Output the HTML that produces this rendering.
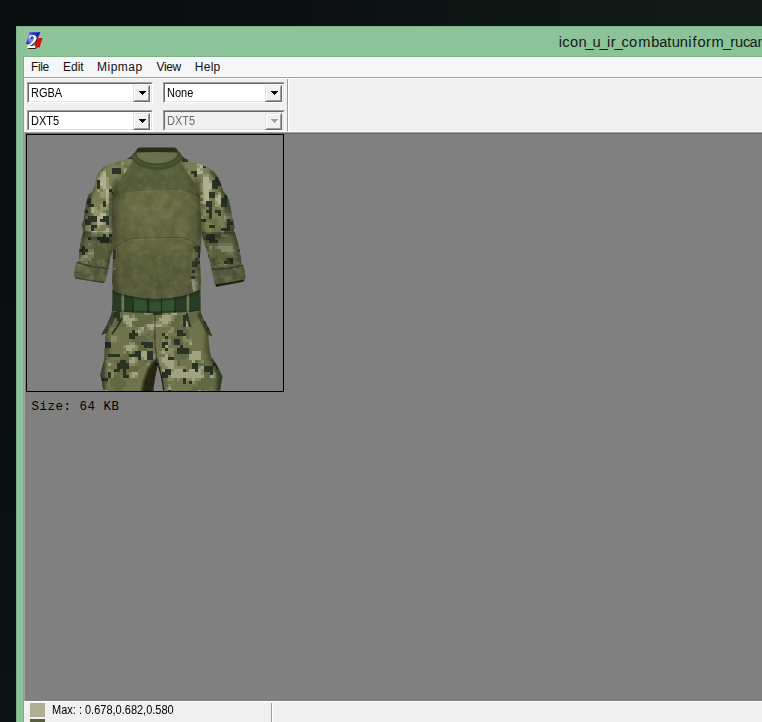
<!DOCTYPE html>
<html lang="en"><head><meta charset="utf-8"><title>TexView 2</title>
<style>
html,body{margin:0;padding:0}
body{width:762px;height:722px;overflow:hidden;position:relative;background:#0b0f10;font-family:"Liberation Sans",sans-serif;color:#000}
.abs{position:absolute}
#desk{left:0;top:0;width:762px;height:722px;background:linear-gradient(90deg,#0a0c0e 0%,#0b0e10 35%,#0e1614 65%,#121b18 100%)}
#deskl{left:0;top:0;width:16px;height:722px;background:linear-gradient(180deg,#0a0c0e 0%,#0a0e0f 50%,#0b1413 100%)}
#win{left:16px;top:26px;width:760px;height:710px;background:#8dc399;box-shadow:0 0 0 1px rgba(0,0,0,.0)}
#winedge{left:16px;top:26px;width:760px;height:710px;border:1px solid #7fb08a;box-sizing:border-box}
#menu{left:24px;top:57px;width:740px;height:20px;background:#f5f6f7}
#menuline{left:24px;top:77px;width:740px;height:1px;background:#a0a0a0}
#menuline2{left:24px;top:78px;width:740px;height:1px;background:#ffffff}
.mi{position:absolute;top:60px;font-size:12px;line-height:15px;white-space:nowrap;color:#111}
#tool{left:24px;top:79px;width:740px;height:53px;background:#f0f0f0}
.combo{position:absolute;height:21px;box-sizing:border-box;background:#fff;border-top:1px solid #a0a0a0;border-left:1px solid #a0a0a0;border-right:1px solid #fff;border-bottom:1px solid #fff}
.combo .in{position:absolute;left:0;top:0;right:0;bottom:0;border-top:1px solid #696969;border-left:1px solid #696969;border-right:1px solid #e3e3e3;border-bottom:1px solid #e3e3e3}
.combo .tx{position:absolute;left:3px;top:4px;font-size:11px;line-height:13px;white-space:nowrap;transform:scaleY(1.125);transform-origin:0 10.5px}
.combo .btn{position:absolute;right:2px;top:2px;width:17px;height:17px;box-sizing:border-box;background:#f0f0f0;border-top:1px solid #e3e3e3;border-left:1px solid #e3e3e3;border-right:1px solid #696969;border-bottom:1px solid #696969}
.combo .btn i{position:absolute;left:0;top:0;right:0;bottom:0;border-top:1px solid #fff;border-left:1px solid #fff;border-right:1px solid #a0a0a0;border-bottom:1px solid #a0a0a0}
.combo .btn svg{position:absolute;left:5px;top:5px}
.combo.dis{background:#f0f0f0}
.combo.dis .tx{color:#6d6d6d}
#client{left:24px;top:132px;width:740px;height:569px;background:#808080}
#frame{left:26px;top:134px;width:258px;height:258px;background:#000}
#pic{left:27px;top:135px;width:256px;height:256px;display:block}
#size{left:31.5px;top:399.5px;font-family:"Liberation Mono",monospace;font-size:12.5px;letter-spacing:.5px;line-height:14px;white-space:pre;color:#000}
#status{left:24px;top:701px;width:740px;height:21px;background:#f0f0f0;border-top:1px solid #fff}
#sw1{left:30px;top:703px;width:15px;height:14px;background:#adae94}
#sw2{left:30px;top:719px;width:15px;height:5px;background:#5a5d3f}
#stx{left:52px;top:703.5px;font-size:11px;line-height:13px;white-space:nowrap;transform:scaleY(1.125);transform-origin:0 10.5px}
</style></head><body>
<div id="desk" class="abs"></div><div id="deskl" class="abs"></div>
<div id="win" class="abs"></div>
<div id="winedge" class="abs"></div>
<svg class="abs" style="left:22px;top:29px" width="24" height="24" viewBox="22 29 24 24">
<defs><linearGradient id="gib" gradientUnits="userSpaceOnUse" x1="26" y1="42" x2="40" y2="33"><stop offset="0" stop-color="#1a22d8"/><stop offset=".3" stop-color="#8c96f4"/><stop offset=".62" stop-color="#2a34d6"/><stop offset="1" stop-color="#0808a8"/></linearGradient><filter id="ish" x="-20%" y="-20%" width="150%" height="150%"><feOffset in="SourceAlpha" dx=".7" dy=".5" result="o"/><feFlood flood-color="#3a1010" flood-opacity=".9"/><feComposite in2="o" operator="in"/><feMerge><feMergeNode/><feMergeNode in="SourceGraphic"/></feMerge></filter></defs>
<polygon points="29.2,32.2 40.4,32.2 35.2,44 26,44" fill="url(#gib)"/>
<polygon points="38.2,38 42.6,38 39.6,47.6 33.6,47.6" fill="#d41010"/>
<rect x="28.4" y="47.6" width="7.4" height="1.2" fill="#1c2a1c"/>
<text x="27.6" y="47.6" font-family="Liberation Serif,serif" font-style="italic" font-weight="bold" font-size="18.5" fill="#fff" filter="url(#ish)">2</text>
</svg>
<svg class="abs" style="left:540px;top:26px" width="222" height="31" viewBox="540 26 222 31"><text x="558.78 562.26 569.88 578.42 585.45 592.47 599.50 606.97 610.68 614.56 621.50 629.12 638.13 651.21 659.24 667.30 671.79 679.82 688.30 692.40 697.39 706.06 711.42 722.99 730.15 735.04 742.98 749.60 757.61 770.68 778.21 785.15" y="47" font-family="Liberation Sans,sans-serif" font-size="14.67" fill="#141a15">icon_u_ir_combatuniform_rucamo_ca.paa - TexView 2</text></svg>
<div class="abs" style="left:23px;top:56px;width:745px;height:680px;background:#7fb28b"></div>
<div id="menu" class="abs"></div><div class="abs" style="left:24px;top:76px;width:740px;height:1px;background:#fbfbfb"></div><div id="menuline" class="abs"></div><div id="menuline2" class="abs"></div>
<span class="mi" style="left:31px;letter-spacing:-.4px">File</span>
<span class="mi" style="left:63px">Edit</span>
<span class="mi" style="left:97px;letter-spacing:.5px">Mipmap</span>
<span class="mi" style="left:156.5px;letter-spacing:-.4px">View</span>
<span class="mi" style="left:194.7px;letter-spacing:.3px">Help</span>
<div id="tool" class="abs"></div><div class="abs" style="left:25px;top:79px;width:1px;height:52px;background:#fcfcfc"></div>
<div class="combo" style="left:27px;top:82px;width:126px"><div class="in"></div><span class="tx">RGBA</span><div class="btn"><i></i><svg width="7" height="4" viewBox="0 0 7 4" shape-rendering="crispEdges"><path d="M0 0h7v1h-1v1h-1v1h-1v1h-1v-1h-1v-1h-1v-1h-1z" fill="#000"/></svg></div></div>
<div class="combo" style="left:163px;top:82px;width:122px"><div class="in"></div><span class="tx">None</span><div class="btn"><i></i><svg width="7" height="4" viewBox="0 0 7 4" shape-rendering="crispEdges"><path d="M0 0h7v1h-1v1h-1v1h-1v1h-1v-1h-1v-1h-1v-1h-1z" fill="#000"/></svg></div></div>
<div class="combo" style="left:27px;top:110px;width:126px"><div class="in"></div><span class="tx">DXT5</span><div class="btn"><i></i><svg width="7" height="4" viewBox="0 0 7 4" shape-rendering="crispEdges"><path d="M0 0h7v1h-1v1h-1v1h-1v1h-1v-1h-1v-1h-1v-1h-1z" fill="#000"/></svg></div></div>
<div class="combo dis" style="left:163px;top:110px;width:122px"><div class="in"></div><span class="tx">DXT5</span><div class="btn"><i></i><svg width="7" height="4" viewBox="0 0 7 4" shape-rendering="crispEdges"><path d="M0 0h7v1h-1v1h-1v1h-1v1h-1v-1h-1v-1h-1v-1h-1z" fill="#a0a0a0"/></svg></div></div>
<div class="abs" style="left:287px;top:79px;width:1px;height:53px;background:#a0a0a0"></div>
<div class="abs" style="left:288px;top:79px;width:1px;height:53px;background:#fff"></div>
<div id="client" class="abs"></div>
<div class="abs" style="left:24px;top:131px;width:740px;height:1px;background:#fafafa"></div>
<div class="abs" style="left:24px;top:132px;width:740px;height:1px;background:#a0a0a0"></div>
<div class="abs" style="left:24px;top:133px;width:740px;height:1px;background:#696969"></div>
<div class="abs" style="left:24px;top:132px;width:1px;height:569px;background:#a0a0a0"></div>
<div id="frame" class="abs"></div>
<svg id="pic" class="abs" width="256" height="256" viewBox="27 135 256 256"><defs>
<clipPath id="cls"><path d="M136 153L129.2 157.7L121.4 160.5L110.3 163.8L102.6 167.7L98.1 173.2L95.9 178.8L94.3 186.5L92 192.1L88.7 194.3L86.5 202L84.3 212L83.7 220L81.5 224.5L83.4 231.6L82.6 235L80.4 243.8L79.3 251.6L78.7 261.5L76.5 262.6L75 269L74.3 275.4L75.2 278.4L90 281L103.7 283L105.6 281L107 275L108.1 269.8L108.7 268.2L110.3 257.1L113 250L114 240L114 222L113 200L117 192L123 182L129 174L138 160Z"/></clipPath>
<clipPath id="crs"><path d="M178 153L185.5 158.8L191.5 161.5L197.7 163.8L203.5 165.8L208.8 167.7L214.3 172.1L218.8 177.7L221 184.3L223.2 191L227.6 196.5L230.4 206.5L232.1 215L233.2 220L234.8 227.2L233.4 230.5L235.4 233.8L238.2 243.8L240.4 253.8L241.5 263.8L243.7 266L244.6 271L245.4 277L244.6 280L243.2 281.8L231 284L216.6 286.7L215.4 285.4L214.9 283.7L213 276L211.6 268.2L209.9 261.5L206 248.2L202.2 236L199 222L199 208.2L198 194.6L190 184L181 172L175 158Z"/></clipPath>
<clipPath id="cpa"><path d="M112.2 305L111.7 312.7L111 315.3L108.8 320L106.6 325.5L103.6 330.5L100.8 335L103.5 334.2L106.4 333L105.3 337L105.3 338.2L104.9 345L104.6 351L104 359.9L102.1 367.5L100.2 375.2L101.5 379.6L102.4 385L103.6 392L153.6 392L154.2 384L155.6 376L157 368.5L157.6 366.2L158.6 368.5L160.6 376L162.2 384L163.1 392L220 392L221.3 382.8L222.6 376.4L218.8 368.8L213.7 359.9L211.1 357.3L209.9 351L208.6 340.8L208.2 335L212.4 336.3L209.9 330.6L206.7 324.2L203.5 319.1L201 312.7L200.4 305Z"/></clipPath>
<clipPath id="cto"><path d="M135.5 154L134.3 158.5L130 165L128 168.8L121.4 177.7L115.9 186.5L112.5 195.4L111.4 206.5L112 220L112.5 237L113 250L112.7 262L112.5 270.4L112 281.5L113 290.5L120 293.5L130 296L142 298L156 299L170 298L182 296L192 293L200.4 289L201 281.5L200.5 270.4L199.9 259.3L200.5 248.2L201.6 237.2L201.2 220L200.5 206.5L199.9 195.4L196.6 186.5L191 177.7L184.4 168.8L181 163L178.6 158.5L178.5 154Z"/></clipPath>
<clipPath id="cside"><path d="M202 236L195 244L190.5 262L191 280L193.5 293L202 293Z"/></clipPath><clipPath id="cside2"><path d="M111 246L116.5 250L117.5 262L115.5 270L111 270Z"/></clipPath><clipPath id="cbe"><path d="M112.4 289L120 292.5L130 295L142 297L156 298L170 297L182 295L192 292L200.3 288L200.6 300L200.6 310.5L192 311.8L175 312.6L156 312.9L135 312.6L120 311.8L112.2 310.5L112.3 300Z"/></clipPath>
<linearGradient id="gt" gradientUnits="userSpaceOnUse" x1="0" y1="150" x2="0" y2="300"><stop offset="0" stop-color="#646840"/><stop offset=".3" stop-color="#6b6e45"/><stop offset=".6" stop-color="#676a43"/><stop offset=".82" stop-color="#62653f"/><stop offset="1" stop-color="#595c3a"/></linearGradient>
<linearGradient id="gts" gradientUnits="userSpaceOnUse" x1="111" y1="0" x2="202" y2="0"><stop offset="0" stop-color="#000" stop-opacity=".38"/><stop offset=".1" stop-color="#000" stop-opacity=".08"/><stop offset=".25" stop-color="#000" stop-opacity="0"/><stop offset=".78" stop-color="#000" stop-opacity="0"/><stop offset=".92" stop-color="#000" stop-opacity=".1"/><stop offset="1" stop-color="#000" stop-opacity=".4"/></linearGradient>
<filter id="mot" x="0" y="0" width="100%" height="100%"><feTurbulence type="fractalNoise" baseFrequency="0.09" numOctaves="3" seed="7" result="n"/><feColorMatrix type="matrix" values="0 0 0 0 0  0 0 0 0 0  0 0 0 0 0  1.6 0 0 0 -0.55"/></filter><filter id="mot2" x="0" y="0" width="100%" height="100%"><feTurbulence type="fractalNoise" baseFrequency="0.16" numOctaves="2" seed="3" result="n"/><feColorMatrix type="matrix" values="0 0 0 0 1  0 0 0 0 1  0 0 0 0 .8  1.5 0 0 0 -0.62"/></filter><filter id="bl" x="-5%" y="-5%" width="110%" height="110%"><feGaussianBlur stdDeviation="0.7"/></filter>
<filter id="b1" x="-30%" y="-30%" width="160%" height="160%"><feGaussianBlur stdDeviation="1"/></filter>
<filter id="b2" x="-30%" y="-30%" width="160%" height="160%"><feGaussianBlur stdDeviation="2"/></filter>
<filter id="b4" x="-40%" y="-40%" width="180%" height="180%"><feGaussianBlur stdDeviation="4"/></filter>
</defs><rect x="27" y="135" width="256" height="256" fill="#808080"/><g clip-path="url(#cls)"><g filter="url(#bl)"><rect x="70" y="150" width="70" height="140" fill="#7a7c54"/><path fill="#2c3527" d="M127 156h6v3h-6zM112 168h9v3h-9zM112 171h9v3h-9zM97 180h3v3h-3zM97 183h3v3h-3zM97 186h3v3h-3zM109 189h3v3h-3zM112 192h3v3h-3zM85 198h6v3h-6zM85 201h6v3h-6zM103 201h3v3h-3zM88 204h6v3h-6zM103 204h3v3h-3zM133 204h3v3h-3zM130 207h3v3h-3zM85 210h3v3h-3zM139 210h3v3h-3zM88 216h9v3h-9zM103 216h6v3h-6zM85 219h12v3h-12zM100 219h9v3h-9zM85 222h6v3h-6zM106 222h3v3h-3zM115 222h3v3h-3zM130 222h6v3h-6zM91 225h6v3h-6zM133 225h3v3h-3zM70 228h9v3h-9zM91 228h3v3h-3zM70 231h9v3h-9zM70 234h3v3h-3zM103 234h3v3h-3zM109 234h3v3h-3zM79 237h3v3h-3zM88 237h3v3h-3zM97 237h12v3h-12zM100 240h9v3h-9zM82 246h3v3h-3zM79 249h9v3h-9zM82 252h3v3h-3zM118 276h3v3h-3zM115 279h3v3h-3zM85 282h3v3h-3zM115 282h9v3h-9zM115 285h9v3h-9zM115 288h12v3h-12z"/><path fill="#6a7049" d="M70 150h21v3h-21zM109 150h9v3h-9zM79 153h9v3h-9zM109 153h9v3h-9zM109 156h9v3h-9zM115 159h6v3h-6zM115 162h6v3h-6zM136 162h3v3h-3zM124 165h15v3h-15zM76 168h3v3h-3zM127 168h12v3h-12zM121 171h3v3h-3zM127 171h3v3h-3zM133 171h6v3h-6zM118 174h6v3h-6zM130 174h12v3h-12zM121 177h3v3h-3zM127 177h9v3h-9zM121 180h15v3h-15zM118 183h18v3h-18zM112 186h18v3h-18zM136 186h3v3h-3zM112 189h15v3h-15zM133 189h3v3h-3zM109 192h3v3h-3zM115 192h6v3h-6zM124 192h15v3h-15zM112 195h12v3h-12zM127 195h12v3h-12zM109 198h21v3h-21zM136 198h3v3h-3zM109 201h3v3h-3zM115 201h12v3h-12zM133 201h3v3h-3zM109 204h3v3h-3zM115 204h18v3h-18zM139 204h3v3h-3zM109 207h12v3h-12zM106 210h12v3h-12zM133 210h6v3h-6zM73 213h9v3h-9zM109 213h3v3h-3zM139 213h3v3h-3zM73 216h12v3h-12zM70 219h15v3h-15zM70 222h12v3h-12zM73 225h12v3h-12zM79 228h6v3h-6zM79 231h6v3h-6zM112 231h9v3h-9zM73 234h12v3h-12zM112 234h12v3h-12zM70 237h3v3h-3zM109 237h15v3h-15zM70 240h6v3h-6zM109 240h3v3h-3zM115 240h9v3h-9zM94 243h3v3h-3zM115 243h9v3h-9zM94 246h9v3h-9zM115 246h9v3h-9zM94 249h12v3h-12zM118 249h3v3h-3zM94 252h12v3h-12zM118 252h3v3h-3zM94 255h12v3h-12zM94 258h9v3h-9zM115 258h3v3h-3zM100 261h12v3h-12zM115 261h12v3h-12zM136 261h3v3h-3zM91 264h6v3h-6zM100 264h9v3h-9zM112 264h6v3h-6zM88 267h9v3h-9zM100 267h3v3h-3zM109 267h12v3h-12zM88 270h6v3h-6zM109 270h15v3h-15zM85 273h9v3h-9zM106 273h6v3h-6zM118 273h3v3h-3zM79 276h15v3h-15zM109 276h3v3h-3zM121 276h3v3h-3zM82 279h6v3h-6zM91 279h3v3h-3zM79 282h6v3h-6zM91 282h3v3h-3zM76 285h3v3h-3zM94 285h3v3h-3zM76 288h12v3h-12z"/><path fill="#92946c" d="M109 159h3v3h-3zM121 162h3v3h-3zM73 168h3v3h-3zM103 168h3v3h-3zM124 168h3v3h-3zM73 171h3v3h-3zM97 171h3v3h-3zM130 171h3v3h-3zM73 174h6v3h-6zM97 174h3v3h-3zM124 174h6v3h-6zM73 177h3v3h-3zM79 177h3v3h-3zM94 177h3v3h-3zM106 177h3v3h-3zM124 177h3v3h-3zM76 180h3v3h-3zM94 180h3v3h-3zM106 180h3v3h-3zM94 183h3v3h-3zM106 183h3v3h-3zM136 183h3v3h-3zM100 186h3v3h-3zM106 186h6v3h-6zM130 186h6v3h-6zM97 189h3v3h-3zM103 189h3v3h-3zM127 189h6v3h-6zM100 192h6v3h-6zM121 192h3v3h-3zM100 195h6v3h-6zM124 195h3v3h-3zM133 198h3v3h-3zM112 201h3v3h-3zM130 201h3v3h-3zM136 201h3v3h-3zM100 204h3v3h-3zM106 204h3v3h-3zM112 204h3v3h-3zM94 207h3v3h-3zM100 207h9v3h-9zM133 207h3v3h-3zM139 207h3v3h-3zM94 210h9v3h-9zM94 213h6v3h-6zM85 216h3v3h-3zM103 222h3v3h-3zM97 225h3v3h-3zM139 225h3v3h-3zM109 228h3v3h-3zM97 231h6v3h-6zM88 234h3v3h-3zM97 234h6v3h-6zM76 240h3v3h-3zM112 240h3v3h-3zM88 243h3v3h-3zM109 243h6v3h-6zM109 246h6v3h-6zM88 249h6v3h-6zM85 252h3v3h-3zM79 255h3v3h-3zM88 255h6v3h-6zM73 258h3v3h-3zM127 258h3v3h-3zM82 261h3v3h-3zM112 261h3v3h-3zM109 264h3v3h-3zM124 264h3v3h-3zM85 267h3v3h-3zM103 267h3v3h-3zM121 267h3v3h-3zM127 267h3v3h-3zM85 270h3v3h-3zM106 270h3v3h-3zM103 273h3v3h-3zM133 273h3v3h-3zM136 276h6v3h-6zM88 279h3v3h-3zM109 279h3v3h-3zM82 285h6v3h-6zM91 285h3v3h-3zM112 285h3v3h-3zM124 285h6v3h-6zM127 288h3v3h-3z"/><path fill="#b0b08e" d="M112 159h3v3h-3zM76 171h3v3h-3zM100 171h6v3h-6zM124 171h3v3h-3zM100 174h6v3h-6zM76 177h3v3h-3zM97 177h9v3h-9zM79 180h3v3h-3zM100 180h6v3h-6zM100 183h6v3h-6zM103 186h3v3h-3zM106 189h3v3h-3zM106 192h3v3h-3zM106 195h3v3h-3zM106 198h3v3h-3zM130 198h3v3h-3zM106 201h3v3h-3zM127 201h3v3h-3zM136 204h3v3h-3zM91 207h3v3h-3zM136 207h3v3h-3zM91 210h3v3h-3zM100 213h6v3h-6zM97 216h6v3h-6zM97 219h3v3h-3zM136 219h6v3h-6zM97 222h6v3h-6zM136 222h6v3h-6zM85 225h6v3h-6zM85 228h6v3h-6zM106 228h3v3h-3zM91 231h6v3h-6zM103 231h9v3h-9zM91 234h6v3h-6zM106 234h3v3h-3zM73 237h6v3h-6zM88 252h6v3h-6zM82 255h6v3h-6zM118 255h6v3h-6zM76 258h15v3h-15zM118 258h6v3h-6zM85 261h3v3h-3zM106 267h3v3h-3zM124 267h3v3h-3zM103 270h3v3h-3zM112 273h6v3h-6zM103 276h6v3h-6zM112 276h6v3h-6zM112 279h3v3h-3zM118 279h3v3h-3zM88 282h3v3h-3zM88 285h3v3h-3z"/></g><g filter="url(#b2)" fill="none" stroke="#10180c"><path d="M104 163L96 176L90 192L84 205L82 230L79 250L73 270L73 280" stroke-width="5" stroke-opacity=".55"/><path d="M118 180L113 200L114 240L112 258L108 284" stroke-width="6" stroke-opacity=".5"/><path d="M82 232L95 237.5L111 241" stroke-width="3" stroke-opacity=".6"/></g><rect x="70" y="232" width="50" height="60" fill="#1a2012" fill-opacity=".27"/><path d="M76 262.5L109.5 268L106 284L73 279Z" fill="#5e6542" fill-opacity=".88"/><rect x="70" y="258" width="44" height="30" filter="url(#mot)" opacity=".3"/><rect x="70" y="258" width="44" height="30" filter="url(#mot2)" opacity=".22"/><path d="M75.5 278L90 280.6L104 282.6" stroke="#1c2216" stroke-opacity=".55" stroke-width="1.6" fill="none" filter="url(#bl)"/><path d="M76.5 262.5L92 266.5L109 268.6" stroke="#20281a" stroke-opacity=".6" stroke-width="1.3" fill="none" filter="url(#bl)"/><path d="M84.5 196L91 192L92 230L84 232Z" fill="#1c2416" fill-opacity=".35" filter="url(#b1)"/></g><g clip-path="url(#crs)"><g filter="url(#bl)"><rect x="176" y="150" width="74" height="140" fill="#7a7c54"/><path fill="#2c3527" d="M179 156h6v3h-6zM182 159h6v3h-6zM203 165h3v3h-3zM248 168h3v3h-3zM191 171h6v3h-6zM185 174h3v3h-3zM194 174h3v3h-3zM215 177h3v3h-3zM212 180h9v3h-9zM212 183h9v3h-9zM212 186h6v3h-6zM209 192h6v3h-6zM209 195h6v3h-6zM224 195h3v3h-3zM221 198h6v3h-6zM206 201h6v3h-6zM221 201h6v3h-6zM206 204h6v3h-6zM221 204h6v3h-6zM209 207h3v3h-3zM206 210h6v3h-6zM215 210h6v3h-6zM209 213h3v3h-3zM218 213h3v3h-3zM209 216h3v3h-3zM242 216h6v3h-6zM200 219h6v3h-6zM227 219h3v3h-3zM239 219h12v3h-12zM227 222h6v3h-6zM239 222h12v3h-12zM179 225h3v3h-3zM191 225h3v3h-3zM209 225h6v3h-6zM227 225h3v3h-3zM221 228h9v3h-9zM206 234h9v3h-9zM206 237h9v3h-9zM209 240h9v3h-9zM188 246h9v3h-9zM239 249h6v3h-6zM206 255h3v3h-3zM203 258h6v3h-6zM227 258h6v3h-6zM224 261h9v3h-9zM218 267h6v3h-6zM215 270h9v3h-9zM218 273h3v3h-3zM200 276h6v3h-6zM200 279h3v3h-3z"/><path fill="#6a7049" d="M176 150h21v3h-21zM215 150h3v3h-3zM248 150h3v3h-3zM176 153h12v3h-12zM176 156h3v3h-3zM185 156h3v3h-3zM176 159h6v3h-6zM176 162h9v3h-9zM176 165h9v3h-9zM176 168h12v3h-12zM176 171h6v3h-6zM209 171h6v3h-6zM176 174h3v3h-3zM212 174h6v3h-6zM224 174h27v3h-27zM218 177h33v3h-33zM176 180h3v3h-3zM221 180h15v3h-15zM239 180h12v3h-12zM176 183h3v3h-3zM221 183h15v3h-15zM239 183h12v3h-12zM176 186h3v3h-3zM182 186h3v3h-3zM221 186h9v3h-9zM239 186h12v3h-12zM176 189h3v3h-3zM215 189h15v3h-15zM233 189h3v3h-3zM248 189h3v3h-3zM182 192h3v3h-3zM215 192h3v3h-3zM221 192h9v3h-9zM233 192h3v3h-3zM176 195h3v3h-3zM221 195h3v3h-3zM227 195h9v3h-9zM212 198h3v3h-3zM227 198h12v3h-12zM212 201h3v3h-3zM227 201h24v3h-24zM212 204h3v3h-3zM227 204h18v3h-18zM248 204h3v3h-3zM215 207h3v3h-3zM224 207h21v3h-21zM224 210h3v3h-3zM236 210h3v3h-3zM182 213h3v3h-3zM176 216h3v3h-3zM185 216h9v3h-9zM206 216h3v3h-3zM176 219h21v3h-21zM206 219h12v3h-12zM176 222h3v3h-3zM185 222h15v3h-15zM212 222h6v3h-6zM236 222h3v3h-3zM176 225h3v3h-3zM182 225h9v3h-9zM194 225h3v3h-3zM215 225h6v3h-6zM236 225h15v3h-15zM179 228h9v3h-9zM191 228h12v3h-12zM212 228h9v3h-9zM236 228h15v3h-15zM176 231h12v3h-12zM200 231h6v3h-6zM212 231h9v3h-9zM224 231h3v3h-3zM239 231h12v3h-12zM176 234h6v3h-6zM197 234h3v3h-3zM215 234h6v3h-6zM242 234h3v3h-3zM179 237h3v3h-3zM197 237h9v3h-9zM242 237h3v3h-3zM179 240h3v3h-3zM176 243h3v3h-3zM242 243h3v3h-3zM179 246h3v3h-3zM215 255h3v3h-3zM191 258h9v3h-9zM212 258h6v3h-6zM191 261h18v3h-18zM212 261h3v3h-3zM191 264h21v3h-21zM191 267h9v3h-9zM206 267h6v3h-6zM194 270h3v3h-3zM206 270h6v3h-6zM206 273h6v3h-6zM206 276h9v3h-9zM203 279h12v3h-12zM197 282h21v3h-21zM200 285h9v3h-9zM212 285h3v3h-3zM218 285h3v3h-3zM248 285h3v3h-3zM215 288h9v3h-9z"/><path fill="#92946c" d="M230 150h6v3h-6zM218 153h6v3h-6zM197 159h3v3h-3zM218 162h3v3h-3zM197 165h3v3h-3zM236 165h3v3h-3zM200 168h3v3h-3zM236 168h3v3h-3zM245 168h3v3h-3zM215 171h3v3h-3zM224 171h3v3h-3zM182 174h3v3h-3zM203 174h6v3h-6zM218 174h6v3h-6zM182 177h3v3h-3zM179 180h3v3h-3zM209 180h3v3h-3zM179 183h3v3h-3zM200 183h3v3h-3zM200 186h3v3h-3zM230 186h6v3h-6zM179 189h3v3h-3zM191 189h3v3h-3zM200 189h3v3h-3zM209 189h3v3h-3zM218 192h3v3h-3zM230 192h3v3h-3zM248 192h3v3h-3zM215 195h3v3h-3zM245 195h3v3h-3zM245 198h6v3h-6zM215 201h3v3h-3zM215 204h6v3h-6zM245 204h3v3h-3zM185 207h3v3h-3zM197 207h6v3h-6zM200 210h6v3h-6zM242 210h6v3h-6zM200 213h6v3h-6zM224 213h6v3h-6zM233 213h3v3h-3zM245 213h6v3h-6zM179 216h6v3h-6zM233 216h3v3h-3zM197 219h3v3h-3zM224 219h3v3h-3zM182 222h3v3h-3zM188 228h3v3h-3zM221 231h3v3h-3zM227 234h3v3h-3zM185 240h3v3h-3zM197 240h3v3h-3zM179 243h3v3h-3zM188 243h9v3h-9zM203 243h6v3h-6zM218 243h15v3h-15zM182 246h3v3h-3zM200 246h3v3h-3zM215 246h3v3h-3zM236 246h6v3h-6zM191 249h3v3h-3zM206 249h6v3h-6zM233 249h3v3h-3zM191 252h15v3h-15zM209 252h3v3h-3zM227 252h6v3h-6zM242 252h3v3h-3zM188 255h9v3h-9zM209 255h3v3h-3zM209 258h3v3h-3zM185 261h3v3h-3zM209 261h3v3h-3zM218 264h6v3h-6zM200 267h6v3h-6zM215 267h3v3h-3zM185 273h12v3h-12zM221 273h9v3h-9zM248 279h3v3h-3zM248 282h3v3h-3zM230 285h3v3h-3zM188 288h6v3h-6z"/><path fill="#b0b08e" d="M218 150h3v3h-3zM194 159h3v3h-3zM197 162h9v3h-9zM200 165h3v3h-3zM218 165h3v3h-3zM197 168h3v3h-3zM218 168h6v3h-6zM233 168h3v3h-3zM197 171h6v3h-6zM218 171h6v3h-6zM185 177h3v3h-3zM203 177h6v3h-6zM182 180h3v3h-3zM203 180h6v3h-6zM203 183h9v3h-9zM179 186h3v3h-3zM203 186h9v3h-9zM203 189h6v3h-6zM230 189h3v3h-3zM203 192h6v3h-6zM200 195h9v3h-9zM218 195h3v3h-3zM248 195h3v3h-3zM203 198h6v3h-6zM215 198h6v3h-6zM200 201h6v3h-6zM218 201h3v3h-3zM230 213h3v3h-3zM200 216h3v3h-3zM224 216h9v3h-9zM179 222h3v3h-3zM221 234h6v3h-6zM182 240h3v3h-3zM200 240h6v3h-6zM182 243h6v3h-6zM197 243h3v3h-3zM185 246h3v3h-3zM209 246h3v3h-3zM218 246h15v3h-15zM242 246h3v3h-3zM185 249h6v3h-6zM221 249h12v3h-12zM188 252h3v3h-3zM206 252h3v3h-3zM239 252h3v3h-3zM224 264h3v3h-3zM224 267h6v3h-6zM197 270h9v3h-9zM224 270h9v3h-9zM197 273h9v3h-9zM191 276h9v3h-9z"/></g><g filter="url(#b2)" fill="none" stroke="#10180c"><path d="M212 168L220 180L224 190L231 200L235 228L240 252L246 268L246 282" stroke-width="5" stroke-opacity=".55"/><path d="M196 180L199 200L200 230L205 250L212 285" stroke-width="6" stroke-opacity=".5"/><path d="M203 240L220 236L236 231" stroke-width="3" stroke-opacity=".6"/></g><rect x="196" y="232" width="56" height="60" fill="#1a2012" fill-opacity=".3"/><path d="M210.5 268.5L243.5 263.5L246 282L215 287Z" fill="#555c3c" fill-opacity=".9"/><rect x="206" y="258" width="44" height="32" filter="url(#mot)" opacity=".3"/><rect x="206" y="258" width="44" height="32" filter="url(#mot2)" opacity=".22"/><path d="M216 285.8L231 283.6L244 281" stroke="#10150c" stroke-opacity=".85" stroke-width="3" fill="none" filter="url(#bl)"/><path d="M211 269.5L228 268.5L243.5 265" stroke="#20281a" stroke-opacity=".6" stroke-width="1.3" fill="none" filter="url(#bl)"/><path d="M222 190L229 196L235 231L226 233Z" fill="#1c2416" fill-opacity=".4" filter="url(#b1)"/></g><g clip-path="url(#cpa)"><g filter="url(#bl)"><rect x="96" y="303" width="130" height="92" fill="#7a7c54"/><path fill="#2c3527" d="M111 303h3v3h-3zM111 306h3v3h-3zM180 306h3v3h-3zM117 309h3v3h-3zM114 312h6v3h-6zM153 312h9v3h-9zM114 315h6v3h-6zM183 315h3v3h-3zM207 315h3v3h-3zM117 318h3v3h-3zM183 318h3v3h-3zM207 318h6v3h-6zM183 321h3v3h-3zM204 321h9v3h-9zM183 324h3v3h-3zM207 327h3v3h-3zM132 330h3v3h-3zM177 330h6v3h-6zM129 333h9v3h-9zM162 333h3v3h-3zM177 333h9v3h-9zM96 336h3v3h-3zM129 336h6v3h-6zM165 336h3v3h-3zM174 339h6v3h-6zM105 342h6v3h-6zM141 342h12v3h-12zM162 342h6v3h-6zM174 342h6v3h-6zM105 345h6v3h-6zM144 345h9v3h-9zM162 345h3v3h-3zM180 345h3v3h-3zM102 348h3v3h-3zM165 348h3v3h-3zM177 348h12v3h-12zM135 351h6v3h-6zM147 351h6v3h-6zM177 351h12v3h-12zM108 354h12v3h-12zM129 354h12v3h-12zM147 354h6v3h-6zM219 354h6v3h-6zM138 357h3v3h-3zM147 357h6v3h-6zM168 357h6v3h-6zM213 357h12v3h-12zM120 360h6v3h-6zM216 360h12v3h-12zM117 363h12v3h-12zM156 363h3v3h-3zM192 363h6v3h-6zM213 363h12v3h-12zM117 366h12v3h-12zM192 366h6v3h-6zM204 366h9v3h-9zM216 366h9v3h-9zM114 369h6v3h-6zM123 369h3v3h-3zM165 369h6v3h-6zM183 369h3v3h-3zM195 369h3v3h-3zM204 369h9v3h-9zM108 372h3v3h-3zM123 372h3v3h-3zM162 372h9v3h-9zM210 372h3v3h-3zM108 375h3v3h-3zM123 375h6v3h-6zM162 375h6v3h-6zM99 378h9v3h-9zM183 378h3v3h-3zM183 381h3v3h-3zM189 381h3v3h-3zM168 390h3v3h-3z"/><path fill="#6a7049" d="M96 303h6v3h-6zM105 303h6v3h-6zM114 303h3v3h-3zM138 303h9v3h-9zM189 303h9v3h-9zM96 306h3v3h-3zM105 306h6v3h-6zM114 306h3v3h-3zM138 306h9v3h-9zM189 306h3v3h-3zM195 306h3v3h-3zM108 309h9v3h-9zM120 309h3v3h-3zM138 309h3v3h-3zM189 309h3v3h-3zM210 309h3v3h-3zM108 312h6v3h-6zM120 312h3v3h-3zM135 312h9v3h-9zM189 312h9v3h-9zM204 312h3v3h-3zM210 312h6v3h-6zM111 315h3v3h-3zM120 315h3v3h-3zM135 315h18v3h-18zM177 315h6v3h-6zM186 315h18v3h-18zM210 315h9v3h-9zM111 318h6v3h-6zM120 318h3v3h-3zM138 318h15v3h-15zM174 318h9v3h-9zM186 318h12v3h-12zM111 321h12v3h-12zM132 321h21v3h-21zM171 321h9v3h-9zM189 321h6v3h-6zM111 324h15v3h-15zM135 324h9v3h-9zM171 324h12v3h-12zM189 324h3v3h-3zM174 327h12v3h-12zM174 330h3v3h-3zM183 330h6v3h-6zM147 333h3v3h-3zM153 333h3v3h-3zM186 333h3v3h-3zM135 336h12v3h-12zM150 336h6v3h-6zM171 336h12v3h-12zM186 336h3v3h-3zM132 339h18v3h-18zM171 339h3v3h-3zM180 339h3v3h-3zM135 342h6v3h-6zM171 342h3v3h-3zM180 342h3v3h-3zM138 345h6v3h-6zM225 345h3v3h-3zM138 348h9v3h-9zM189 348h3v3h-3zM225 348h3v3h-3zM126 351h3v3h-3zM132 351h3v3h-3zM174 351h3v3h-3zM189 351h3v3h-3zM123 354h6v3h-6zM174 354h15v3h-15zM210 354h3v3h-3zM120 357h9v3h-9zM174 357h12v3h-12zM204 357h9v3h-9zM114 360h6v3h-6zM126 360h3v3h-3zM138 360h3v3h-3zM144 360h3v3h-3zM177 360h3v3h-3zM195 360h3v3h-3zM204 360h12v3h-12zM141 363h3v3h-3zM177 363h3v3h-3zM198 363h15v3h-15zM129 366h12v3h-12zM120 369h3v3h-3zM126 369h12v3h-12zM117 372h6v3h-6zM126 372h3v3h-3zM204 372h6v3h-6zM96 375h6v3h-6zM114 375h6v3h-6zM204 375h6v3h-6zM111 378h12v3h-12zM201 378h27v3h-27zM105 381h3v3h-3zM111 381h15v3h-15zM198 381h30v3h-30zM111 384h15v3h-15zM198 384h30v3h-30zM114 387h9v3h-9zM147 387h3v3h-3zM192 387h18v3h-18zM213 387h12v3h-12zM114 390h9v3h-9zM144 390h6v3h-6zM189 390h9v3h-9zM201 390h3v3h-3zM219 390h3v3h-3zM114 393h6v3h-6zM147 393h3v3h-3zM189 393h12v3h-12z"/><path fill="#92946c" d="M102 303h3v3h-3zM117 303h3v3h-3zM132 303h3v3h-3zM198 303h3v3h-3zM102 306h3v3h-3zM102 309h6v3h-6zM141 309h3v3h-3zM150 309h3v3h-3zM174 309h3v3h-3zM144 312h6v3h-6zM165 312h3v3h-3zM207 312h3v3h-3zM219 312h3v3h-3zM132 315h3v3h-3zM171 315h3v3h-3zM204 315h3v3h-3zM219 315h3v3h-3zM96 318h3v3h-3zM135 318h3v3h-3zM171 318h3v3h-3zM216 318h3v3h-3zM105 321h6v3h-6zM123 321h3v3h-3zM153 321h9v3h-9zM168 321h3v3h-3zM216 321h3v3h-3zM105 324h3v3h-3zM126 324h3v3h-3zM162 324h6v3h-6zM105 327h6v3h-6zM138 327h3v3h-3zM147 327h3v3h-3zM153 327h3v3h-3zM171 327h3v3h-3zM135 330h3v3h-3zM141 330h3v3h-3zM168 330h6v3h-6zM99 333h3v3h-3zM138 333h3v3h-3zM165 333h3v3h-3zM213 333h3v3h-3zM99 336h3v3h-3zM111 336h6v3h-6zM183 336h3v3h-3zM216 336h3v3h-3zM111 339h6v3h-6zM162 339h3v3h-3zM168 339h3v3h-3zM183 339h9v3h-9zM99 342h3v3h-3zM129 342h6v3h-6zM168 342h3v3h-3zM123 345h3v3h-3zM135 345h3v3h-3zM219 345h3v3h-3zM96 348h6v3h-6zM132 348h6v3h-6zM162 348h3v3h-3zM168 348h6v3h-6zM123 351h3v3h-3zM129 351h3v3h-3zM159 351h3v3h-3zM165 351h9v3h-9zM153 354h3v3h-3zM171 354h3v3h-3zM129 357h3v3h-3zM135 357h3v3h-3zM141 357h3v3h-3zM153 357h3v3h-3zM159 357h3v3h-3zM105 360h3v3h-3zM135 360h3v3h-3zM159 360h3v3h-3zM174 360h3v3h-3zM201 360h3v3h-3zM96 363h3v3h-3zM129 363h6v3h-6zM147 363h3v3h-3zM159 363h6v3h-6zM174 363h3v3h-3zM150 366h3v3h-3zM156 366h3v3h-3zM162 366h6v3h-6zM174 366h12v3h-12zM198 366h3v3h-3zM108 369h3v3h-3zM159 369h3v3h-3zM171 369h3v3h-3zM201 369h3v3h-3zM111 372h3v3h-3zM129 372h3v3h-3zM159 372h3v3h-3zM201 372h3v3h-3zM213 372h3v3h-3zM111 375h3v3h-3zM129 375h3v3h-3zM135 375h3v3h-3zM168 375h3v3h-3zM213 375h3v3h-3zM168 378h6v3h-6zM177 378h3v3h-3zM186 378h6v3h-6zM195 378h6v3h-6zM192 381h3v3h-3zM153 384h3v3h-3zM162 384h3v3h-3zM168 384h3v3h-3zM99 387h3v3h-3zM150 387h3v3h-3zM159 387h3v3h-3zM165 387h3v3h-3zM150 390h3v3h-3zM162 390h6v3h-6zM204 390h3v3h-3zM102 393h6v3h-6zM171 393h3v3h-3zM180 393h3v3h-3z"/><path fill="#b0b08e" d="M159 303h12v3h-12zM144 309h6v3h-6zM171 309h3v3h-3zM222 309h6v3h-6zM171 312h6v3h-6zM222 312h6v3h-6zM123 315h6v3h-6zM162 315h9v3h-9zM123 318h12v3h-12zM159 318h12v3h-12zM201 318h3v3h-3zM126 321h6v3h-6zM162 321h6v3h-6zM186 321h3v3h-3zM219 321h3v3h-3zM108 324h3v3h-3zM129 324h3v3h-3zM147 324h15v3h-15zM186 324h3v3h-3zM141 327h3v3h-3zM150 327h3v3h-3zM138 330h3v3h-3zM216 333h3v3h-3zM189 342h3v3h-3zM99 345h6v3h-6zM126 345h9v3h-9zM165 345h3v3h-3zM126 348h6v3h-6zM219 348h6v3h-6zM141 351h6v3h-6zM162 351h3v3h-3zM192 351h9v3h-9zM219 351h3v3h-3zM141 354h6v3h-6zM165 354h3v3h-3zM189 354h12v3h-12zM132 357h3v3h-3zM144 357h3v3h-3zM162 357h6v3h-6zM189 357h12v3h-12zM225 357h3v3h-3zM129 360h6v3h-6zM162 360h12v3h-12zM192 360h3v3h-3zM108 363h3v3h-3zM165 363h9v3h-9zM168 366h6v3h-6zM201 366h3v3h-3zM162 369h3v3h-3zM174 369h9v3h-9zM189 369h6v3h-6zM198 369h3v3h-3zM132 372h6v3h-6zM171 372h30v3h-30zM132 375h3v3h-3zM171 375h33v3h-33zM210 375h3v3h-3zM192 378h3v3h-3zM153 387h3v3h-3zM168 387h3v3h-3zM99 390h9v3h-9zM198 390h3v3h-3zM99 393h3v3h-3zM135 393h6v3h-6zM159 393h12v3h-12z"/></g><rect x="96" y="303" width="130" height="92" fill="#20260f" fill-opacity=".1"/><g filter="url(#b2)" fill="none" stroke="#0c1208"><path d="M111 310L104 332L106 350L99 375L102 392" stroke-width="5" stroke-opacity=".5"/><path d="M201 310L209 332L208 350L222 376L221 392" stroke-width="5" stroke-opacity=".5"/><path d="M158 366L166 392" stroke-width="4" stroke-opacity=".35"/></g><path d="M157 358L158.5 366L156 380L154.5 393L141 393L143.5 381L148 369L153 361Z" fill="#0a0e08" fill-opacity=".78" filter="url(#b1)"/><path d="M158.4 367L161 378L163.6 392" stroke="#0a0e08" stroke-opacity=".75" stroke-width="2.6" fill="none" filter="url(#bl)"/><path d="M155 313L155 345L157 364" stroke="#1a2214" stroke-opacity=".55" stroke-width="1.2" fill="none" filter="url(#bl)"/><path d="M112 311L108.8 320L104 329L100 336L106.4 334L110 328L116 316Z" fill="#222b1a" fill-opacity=".62" filter="url(#bl)"/><path d="M200 311L203.5 319.1L208 327L213 337L207.6 335.4L204 328L197 315Z" fill="#222b1a" fill-opacity=".5" filter="url(#bl)"/><path d="M100 362L104 360L106 378L104 392L99 392Z" fill="#1c2416" fill-opacity=".45" filter="url(#b1)"/><path d="M212 358L216 362L223 376L221 392L216 392L217 378Z" fill="#1c2416" fill-opacity=".45" filter="url(#b1)"/><path d="M122 318L117 327L112 334" stroke="#151c10" stroke-opacity=".7" stroke-width="2" fill="none" filter="url(#bl)"/><path d="M186.5 313L188 320L190 327" stroke="#151c10" stroke-opacity=".7" stroke-width="2.4" fill="none" filter="url(#bl)"/></g><path d="M112.4 289L120 292.5L130 295L142 297L156 298L170 297L182 295L192 292L200.3 288L200.6 300L200.6 310.5L192 311.8L175 312.6L156 312.9L135 312.6L120 311.8L112.2 310.5L112.3 300Z" fill="#283b25"/><g clip-path="url(#cbe)"><rect x="133" y="294" width="42" height="17.5" fill="#33512f"/><rect x="132.4" y="294" width="1.3" height="19" fill="#1f2e1b"/><rect x="146.9" y="294" width="1.3" height="19" fill="#1f2e1b"/><rect x="148.20000000000002" y="294" width="1.3" height="19" fill="#1f2e1b"/><rect x="160.9" y="294" width="1.3" height="19" fill="#1f2e1b"/><rect x="174.4" y="294" width="1.3" height="19" fill="#1f2e1b"/><rect x="121.5" y="290" width="2.6" height="22" fill="#6f7a4c"/><rect x="186.6" y="290" width="2.6" height="22" fill="#6f7a4c"/><path d="M112 290L130 296L156 299.5L182 296.5L200 289.5" stroke="#131a0f" stroke-opacity=".6" stroke-width="3" fill="none" filter="url(#b1)"/><path d="M112 311.5L156 313.5L200 311.5" stroke="#131a0f" stroke-opacity=".5" stroke-width="2" fill="none" filter="url(#b1)"/></g><path d="M135.5 154L134.3 158.5L130 165L128 168.8L121.4 177.7L115.9 186.5L112.5 195.4L111.4 206.5L112 220L112.5 237L113 250L112.7 262L112.5 270.4L112 281.5L113 290.5L120 293.5L130 296L142 298L156 299L170 298L182 296L192 293L200.4 289L201 281.5L200.5 270.4L199.9 259.3L200.5 248.2L201.6 237.2L201.2 220L200.5 206.5L199.9 195.4L196.6 186.5L191 177.7L184.4 168.8L181 163L178.6 158.5L178.5 154Z" fill="url(#gt)"/><g clip-path="url(#cto)"><g filter="url(#bl)" opacity=".8"><g clip-path="url(#cside)"><rect x="186" y="234" width="18" height="62" fill="#7a7c54"/><path fill="#2c3527" d="M189 240h6v3h-6zM189 243h6v3h-6zM192 246h9v3h-9zM195 249h6v3h-6zM198 252h3v3h-3zM198 255h9v3h-9zM195 258h3v3h-3zM192 261h9v3h-9zM192 264h6v3h-6zM192 270h3v3h-3zM189 276h6v3h-6zM189 282h3v3h-3zM186 285h6v3h-6zM186 288h6v3h-6zM186 291h6v3h-6zM186 294h3v3h-3z"/><path fill="#6a7049" d="M201 234h3v3h-3zM186 249h3v3h-3zM186 252h6v3h-6zM186 255h6v3h-6zM189 258h6v3h-6zM186 261h6v3h-6zM186 264h6v3h-6zM186 267h21v3h-21zM186 270h6v3h-6zM201 270h6v3h-6zM201 273h6v3h-6zM195 291h9v3h-9zM189 294h18v3h-18z"/><path fill="#92946c" d="M204 249h3v3h-3zM186 273h3v3h-3zM195 273h3v3h-3zM189 279h3v3h-3zM195 279h3v3h-3zM195 285h3v3h-3zM195 288h3v3h-3zM192 291h3v3h-3z"/><path fill="#b0b08e" d="M192 279h3v3h-3zM192 282h6v3h-6zM192 285h3v3h-3zM192 288h3v3h-3z"/></g></g><g filter="url(#bl)" opacity=".6"><g clip-path="url(#cside2)"><rect x="110" y="244" width="12" height="28" fill="#7a7c54"/><path fill="#2c3527" d="M122 244h3v3h-3zM122 247h3v3h-3zM110 250h6v3h-6zM110 253h6v3h-6zM110 256h6v3h-6zM110 271h6v3h-6z"/><path fill="#6a7049" d="M110 244h12v3h-12zM110 247h9v3h-9zM122 262h3v3h-3zM119 265h6v3h-6zM116 268h3v3h-3zM116 271h3v3h-3z"/><path fill="#b0b08e" d="M113 268h3v3h-3z"/></g></g><path d="M105 150L210 150L210 203L199.7 199C190 192 184 190.5 175 190.5L137 191.5C128 192 120 195 113.5 199L105 203Z" fill="#4f5a36" fill-opacity=".55"/><path d="M113.5 199C120 195 128 192 137 191.5L175 190.5C184 190.5 190 192 199.7 199" stroke="#7a8153" stroke-opacity=".5" stroke-width="1" fill="none"/><path d="M115.6 247.6C122 242 128 238.6 135.3 238.2L178.9 237.2C186 237.6 192 241 197.6 245.5" stroke="#3c4328" stroke-opacity=".55" stroke-width="1.1" fill="none" filter="url(#bl)"/><path d="M115.6 249C122 243.4 128 240 135.3 239.6L178.9 238.6C186 239 192 242.4 197.6 247" stroke="#7d8456" stroke-opacity=".35" stroke-width="1.2" fill="none" filter="url(#bl)"/><ellipse cx="156" cy="268" rx="30" ry="14" fill="#3b4227" fill-opacity=".2" filter="url(#b4)"/><ellipse cx="150" cy="215" rx="22" ry="14" fill="#7a8054" fill-opacity=".22" filter="url(#b4)"/><rect x="108" y="150" width="98" height="152" filter="url(#mot)" opacity=".16"/><rect x="108" y="150" width="98" height="152" filter="url(#mot2)" opacity=".10"/><path d="M135.5 154L134.3 158.5L130 165L128 168.8L121.4 177.7L115.9 186.5L112.5 195.4L111.4 206.5L112 220L112.5 237L113 250L112.7 262L112.5 270.4L112 281.5L113 290.5L120 293.5L130 296L142 298L156 299L170 298L182 296L192 293L200.4 289L201 281.5L200.5 270.4L199.9 259.3L200.5 248.2L201.6 237.2L201.2 220L200.5 206.5L199.9 195.4L196.6 186.5L191 177.7L184.4 168.8L181 163L178.6 158.5L178.5 154Z" fill="url(#gts)"/></g><path d="M136.6 151.5L177.2 151.5L177.4 156C173 161 166 164 157 164C148 164 141 161 136.4 156Z" fill="#69724a"/><path d="M136 150.5C133.5 153 131.6 155.5 131 157.5C133 162.5 139 166.5 146 168.4C150 169.3 154 169.7 157 169.7C160 169.7 164 169.3 168 168.4C175 166.5 181 162.5 183 157.5C182.4 155.5 180.5 153 178 150.5L177 152.5C177.4 155 176.4 157 174.6 158.6C170.5 161.8 164 163.4 157 163.4C150 163.4 143.5 161.8 139.4 158.6C137.6 157 136.6 155 137 152.5Z" fill="#434b2c"/><path d="M134 156.5C137 162 146 166.4 157 166.4C168 166.4 177 162 180 156.5" fill="none" stroke="#59623b" stroke-opacity=".7" stroke-width="1.1"/><path d="M136.3 151.4Q136.3 147.4 140.5 147.4L173.5 147.4Q177.5 147.4 177.5 151.4L177.5 152.6Q157 151.4 136.3 152.6Z" fill="#2a2e1c"/></svg>
<div id="size" class="abs">Size: 64 KB</div>
<div id="status" class="abs"></div>
<div id="sw1" class="abs"></div><div id="sw2" class="abs"></div>
<div id="stx" class="abs">Max: : 0.678,0.682,0.580</div>
<div class="abs" style="left:271px;top:703px;width:1px;height:19px;background:#a0a0a0"></div>
<div class="abs" style="left:272px;top:703px;width:1px;height:19px;background:#fff"></div>
</body></html>
